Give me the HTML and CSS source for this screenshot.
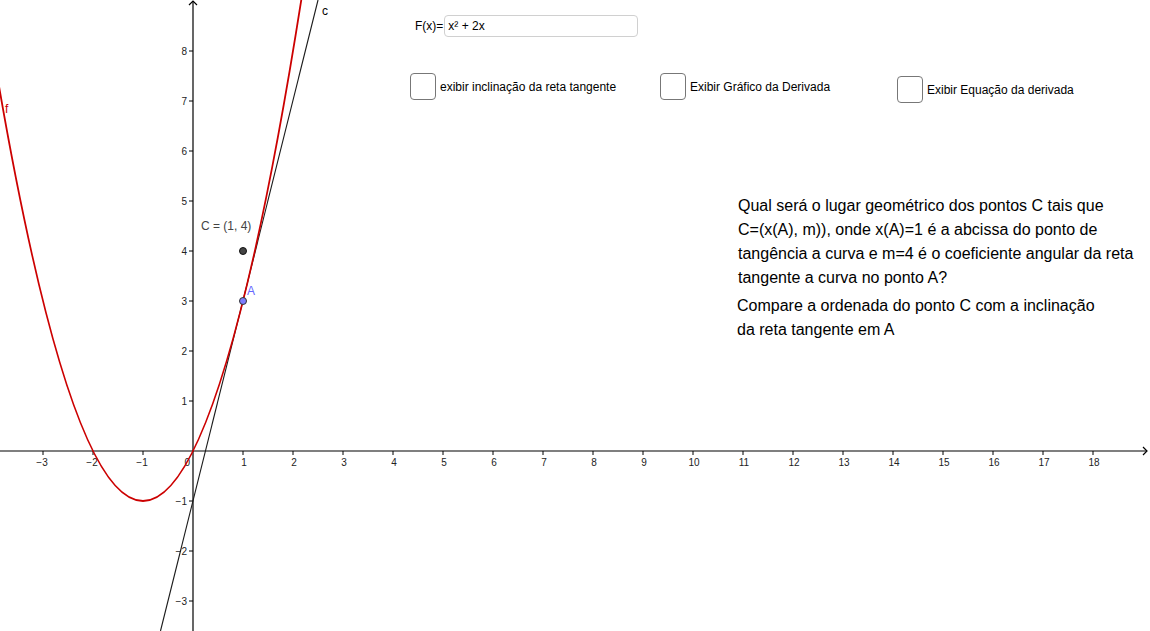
FILE: index.html
```html
<!DOCTYPE html>
<html lang="pt">
  <head>
    <meta charset="UTF-8" />
    <meta name="viewport" content="width=device-width, initial-scale=1.0" />
    <title>Reta tangente</title>
    <link rel="stylesheet" href="styles.css">
  </head>
  <body>
    <div class="applet" id="applet">
      <svg class="graph" id="graph" width="1150" height="631" viewBox="0 0 1150 631">
        <g id="grid"></g>
        <!-- tangent line c: y = 4x - 1 -->
        <line class="tangent" x1="160.5" y1="631" x2="318" y2="0" />
        <!-- f(x) = x^2 + 2x -->
        <path class="curve" d="M -17 -11 Q 143 1013 303 -11" />
        <text class="lbl-c" x="322" y="15">c</text>
        <text class="lbl-f" x="5" y="113">f</text>
        <circle class="pt-c" cx="243" cy="251" r="3.5" />
        <circle class="pt-a" cx="243" cy="301" r="3.5" />
        <text class="lbl-pt" x="201" y="230">C = (1, 4)</text>
        <text class="lbl-a" x="247" y="295">A</text>
      </svg>

      <div class="input-row">
        <span class="input-label">F(x)=</span>
        <div class="input-box">x² + 2x</div>
      </div>

      <label class="check check-1"><span class="box"></span>exibir inclinação da reta tangente</label>
      <label class="check check-2"><span class="box"></span>Exibir Gráfico da Derivada</label>
      <label class="check check-3"><span class="box"></span>Exibir Equação da derivada</label>

      <div class="question">
        Qual será o lugar geométrico dos pontos C tais que<br />
        C=(x(A), m)), onde x(A)=1 é a abcissa do ponto de<br />
        tangência a curva e m=4 é o coeficiente angular da reta<br />
        tangente a curva no ponto A?
      </div>
      <div class="compare">
        Compare a ordenada do ponto C com a inclinação<br />
        da reta tangente em A
      </div>
    </div>

    <script>
      // Draw axes, ticks and labels (50px per unit, origin at 193,451)
      const ox = 193, oy = 451, unit = 50;
      const ns = "http://www.w3.org/2000/svg";
      const grid = document.getElementById("grid");

      function add(tag, attrs, text) {
        const el = document.createElementNS(ns, tag);
        for (const k in attrs) el.setAttribute(k, attrs[k]);
        if (text !== undefined) el.textContent = text;
        grid.appendChild(el);
        return el;
      }

      // axes
      add("line", { class: "axis", x1: 0, y1: oy, x2: 1147, y2: oy });
      add("line", { class: "axis", x1: ox, y1: 631, x2: ox, y2: 1 });
      add("polyline", { class: "arrow", points: `${1143},${oy - 4} ${1147},${oy} ${1143},${oy + 4}` });
      add("polyline", { class: "arrow", points: `${ox - 4},${5} ${ox},${1} ${ox + 4},${5}` });

      // x ticks
      for (let i = -3; i <= 18; i++) {
        if (i === 0) continue;
        const x = ox + i * unit;
        add("line", { class: "tick", x1: x, y1: oy, x2: x, y2: oy + 4 });
        const label = i < 0 ? "\u2212" + -i : String(i);
        add("text", { class: "num", x: i < 0 ? x - 1 : x + 1, y: oy + 15, "text-anchor": "middle" }, label);
      }
      add("text", { class: "num", x: ox - 3, y: oy + 15, "text-anchor": "end" }, "0");

      // y ticks
      for (let j = -3; j <= 8; j++) {
        if (j === 0) continue;
        const y = oy - j * unit;
        add("line", { class: "tick", x1: ox - 4, y1: y, x2: ox, y2: y });
        const label = j < 0 ? "\u2212" + -j : String(j);
        add("text", { class: "num", x: ox - 6, y: y + 3.5, "text-anchor": "end" }, label);
      }
    </script>
  </body>
</html>
```

FILE: styles.css
```css
body {
  margin: 0;
  padding: 0;
  background-color: #fff;
  font-family: "Liberation Sans", Arial, sans-serif;
  overflow: hidden;
}

.applet {
  position: relative;
  width: 1150px;
  height: 631px;
  background: #fff;
  color: #000;
}

.graph {
  position: absolute;
  top: 0;
  left: 0;
  display: block;
}

.axis {
  stroke: #000;
  stroke-width: 1.2;
}

.arrow {
  fill: none;
  stroke: #000;
  stroke-width: 1.2;
}

.tick {
  stroke: #000;
  stroke-width: 1;
}

.num {
  font-family: "Liberation Sans", Arial, sans-serif;
  font-size: 10px;
  fill: #222;
}

.curve {
  fill: none;
  stroke: #cc0000;
  stroke-width: 1.8;
}

.tangent {
  stroke: #1a1a1a;
  stroke-width: 1.1;
}

.lbl-c {
  font-size: 12px;
  fill: #000;
}

.lbl-f {
  font-size: 12px;
  fill: #cc0000;
}

.pt-c {
  fill: #444;
  stroke: #111;
  stroke-width: 1;
}

.pt-a {
  fill: #7d7dff;
  stroke: #333;
  stroke-width: 1;
}

.lbl-pt {
  font-size: 12px;
  fill: #444;
}

.lbl-a {
  font-size: 12px;
  fill: #6666ff;
}

/* input bar */
.input-row {
  position: absolute;
  top: 15px;
  left: 415px;
  display: flex;
  align-items: center;
  font-size: 12px;
}

.input-box {
  width: 189px;
  height: 20px;
  line-height: 20px;
  padding-left: 3px;
  margin-left: 1px;
  border: 1px solid #d0d0d0;
  border-radius: 4px;
  background: #fff;
}

/* checkboxes */
.check {
  position: absolute;
  display: flex;
  align-items: center;
  font-size: 12px;
  cursor: pointer;
}

.check .box {
  width: 24px;
  height: 25px;
  border: 1.5px solid #777;
  border-radius: 4px;
  margin-right: 4px;
  background: #fff;
}

.check-1 {
  top: 73px;
  left: 410px;
}

.check-2 {
  top: 73px;
  left: 660px;
}

.check-3 {
  top: 76px;
  left: 897px;
}

/* text blocks */
.question {
  position: absolute;
  top: 194px;
  left: 738px;
  font-size: 16px;
  line-height: 24px;
  white-space: nowrap;
}

.compare {
  position: absolute;
  top: 294px;
  left: 737px;
  font-size: 16px;
  line-height: 24px;
  white-space: nowrap;
}
```
